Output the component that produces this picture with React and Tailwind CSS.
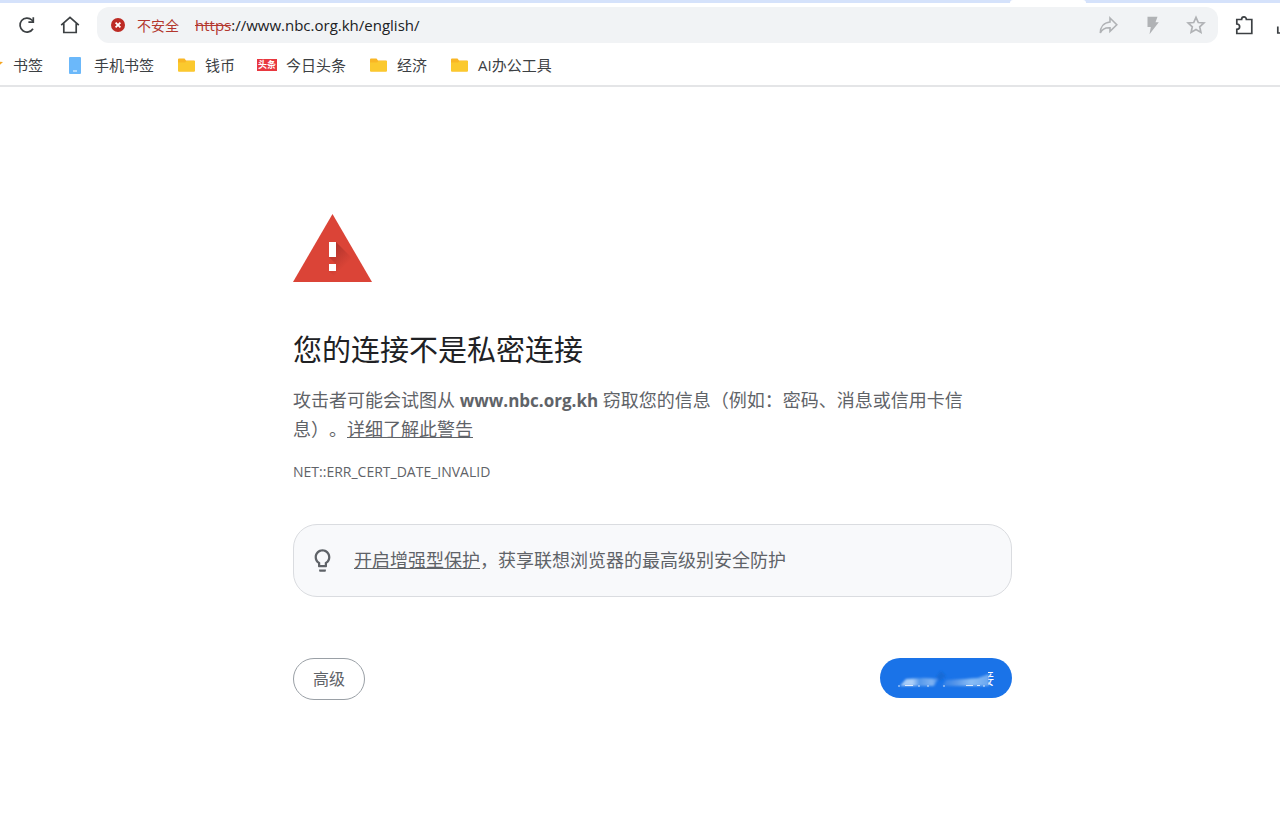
import { useState } from 'react';

const folder = (
  <svg viewBox="0 0 17 14" className="w-[17px] h-[14px]">
    <path d="M0 1.5Q0 .5 1 .5H6.5L8 2.5H16Q17 2.5 17 3.5V12.5Q17 13.5 16 13.5H1Q0 13.5 0 12.5Z" fill="#f9b625" />
    <path d="M0 4.5H7L8.5 3H17V12.5Q17 13.5 16 13.5H1Q0 13.5 0 12.5Z" fill="#fbc92e" />
  </svg>
);

const bookmarks = [
  {
    label: '书签',
    icon: (
      <svg viewBox="0 0 20 20" className="w-5 h-5">
        <path d="M10 1l2.600 5.400 6.400.6-4.600 4.300 1.300 6.200L10 14.400l-5.700 3.100 1.300-6.200L1 7l6.400-.6z" fill="#f5a623" />
      </svg>
    ),
  },
  {
    label: '手机书签',
    icon: (
      <svg viewBox="0 0 12 17" className="w-3 h-[17px]">
        <rect width="12" height="17" rx="1" fill="#6bb8fa" />
        <rect x="4" y="13.500" width="4" height="1" fill="#fff" />
      </svg>
    ),
  },
  { label: '钱币', icon: folder },
  {
    label: '今日头条',
    icon: (
      <span className="w-5 h-3 bg-[#e8383f] text-white text-[9px] leading-3 font-bold text-center">头条</span>
    ),
  },
  { label: '经济', icon: folder },
  { label: 'AI办公工具', icon: folder },
];

function TabStrip() {
  return (
    <div className="flex h-[3px] bg-[#d5e2fb]">
      <div className="ml-auto mr-[194px] w-[76px] rounded-t-sm bg-white" />
    </div>
  );
}

function AddressBar() {
  const [url, setUrl] = useState('://www.nbc.org.kh/english/');

  return (
    <div className="flex flex-1 items-center h-9 pl-[14px] pr-3 rounded-xl bg-[#f1f3f5]">
      <svg viewBox="0 0 14 14" className="w-[14px] h-[14px] shrink-0">
        <circle cx="7" cy="7" r="7" fill="#bd2b24" />
        <path d="M4.600 4.600l4.800 4.800M9.400 4.600l-4.800 4.800" stroke="#fff" strokeWidth="1.800" />
      </svg>
      <span className="ml-3 text-[14px] text-[#b3372e]">不安全</span>
      <label htmlFor="url" className="ml-4 text-[15px] text-[#b3372e] line-through">https</label>
      <input
        id="url"
        value={url}
        onChange={(e) => setUrl(e.target.value)}
        className="flex-1 min-w-0 bg-transparent outline-none text-[15px] text-[#202124]"
      />
      <div className="flex items-center gap-6 text-[#b0b2b5]">
        <button type="button" aria-label="分享">
          <svg viewBox="0 0 20 20" className="w-5 h-5" fill="none" stroke="currentColor" strokeWidth="1.600">
            <path d="M12 3L18.800 9.800L12 16.400V12.800C7.500 12.600 4 14 2.300 18C2.300 12 5.800 7.600 12 7Z" />
          </svg>
        </button>
        <button type="button" aria-label="极速">
          <svg viewBox="0 0 20 20" className="w-5 h-5" fill="currentColor">
            <path d="M5.500 1.800H15.500L13.500 7.300H16.800L7.500 19.300L8.800 12H5.500Z" />
          </svg>
        </button>
        <button type="button" aria-label="收藏">
          <svg viewBox="0 0 20 20" className="w-5 h-5" fill="none" stroke="currentColor" strokeWidth="1.700">
            <path d="M10 2.300l2.300 5.200 5.600.5-4.200 3.800 1.200 5.600L10 14.600l-4.900 2.800 1.200-5.600L2.100 8l5.600-.5z" />
          </svg>
        </button>
      </div>
    </div>
  );
}

function Toolbar() {
  return (
    <div className="flex items-center pt-1 pl-[17px] text-[#3c4043]">
      <button type="button" aria-label="重新加载">
        <svg viewBox="0 0 20 20" className="w-5 h-5" fill="none" stroke="currentColor" strokeWidth="1.700">
          <path d="M16 13.700A7 7 0 1 1 14.900 5L16.300 6.700" />
          <path d="M16.300 2.300V7.200H11.400" />
        </svg>
      </button>
      <button type="button" aria-label="主页" className="ml-[23px] mr-[17px]">
        <svg viewBox="0 0 20 20" className="w-5 h-5" fill="none" stroke="currentColor" strokeWidth="1.700">
          <path d="M1.200 10.200L10 2.300L18.800 10.200M3.800 8.500V17.500H16.200V8.500" />
        </svg>
      </button>
      <AddressBar />
      <button type="button" aria-label="扩展程序" className="ml-4">
        <svg viewBox="0 0 20 20" className="w-5 h-5" fill="none" stroke="currentColor" strokeWidth="1.700">
          <path d="M2.800 4.500H7.600C7.600 1 12.400 1 12.400 4.500H17.800V18.500H2.800V14.300C6.600 14.100 6.600 9.200 2.800 9Z" />
        </svg>
      </button>
      <div className="w-[26px] h-5 overflow-hidden">
        <button type="button" aria-label="下载" className="ml-[22px]">
          <svg viewBox="0 0 20 20" className="w-5 h-5" fill="none" stroke="currentColor" strokeWidth="1.700">
            <path d="M1.800 11.500V18H18.200V11.500M10 2V13M5.500 9L10 13.500L14.500 9" />
          </svg>
        </button>
      </div>
    </div>
  );
}

function BookmarksBar() {
  return (
    <nav className="flex items-center gap-[22px] h-11 pt-0.5 -ml-4 border-b-2 border-[#e4e5e7] text-[15px] text-[#3c4043] whitespace-nowrap">
      {bookmarks.map((b) => (
        <a key={b.label} href="#" className="flex items-center gap-[9px]">
          <span className="flex w-5 justify-center">{b.icon}</span>
          {b.label}
        </a>
      ))}
    </nav>
  );
}

function WarningIcon() {
  return (
    <svg viewBox="0 0 79 68" className="w-[79px] h-[68px]">
      <defs>
        <linearGradient id="shade" gradientUnits="userSpaceOnUse" x1="40" y1="36" x2="54" y2="50">
          <stop offset="0" stopColor="#a52f28" stopOpacity=".7" />
          <stop offset="1" stopColor="#a52f28" stopOpacity="0" />
        </linearGradient>
      </defs>
      <path d="M39.500 0L79 68H0Z" fill="#db4437" />
      <path d="M43 28L58 43L70 68H47L36 57L43 50L36 43Z" fill="url(#shade)" />
      <path d="M36 28h7v15h-7zM36 50h7v7h-7z" fill="#fff" />
    </svg>
  );
}

function SafetyButton() {
  return (
    <button type="button" className="relative h-10 px-[18px] rounded-full bg-[#1a73e8] text-white text-[16px] overflow-hidden">
      返回安全连接
      {/* smudge over the label, only the tail of the last character stays clear */}
      <svg viewBox="0 0 132 40" className="absolute inset-0 w-full h-full">
        <defs>
          <filter id="soft" x="-10%" y="-50%" width="120%" height="200%">
            <feGaussianBlur stdDeviation="1.100" />
          </filter>
          <linearGradient id="streak" x1="0" x2="1">
            <stop offset="0" stopColor="#b9d9fb" />
            <stop offset=".14" stopColor="#c6e0fc" />
            <stop offset=".22" stopColor="#5f9fec" />
            <stop offset=".36" stopColor="#93bff4" />
            <stop offset=".45" stopColor="#2b7de8" />
            <stop offset=".62" stopColor="#5f9bea" />
            <stop offset=".8" stopColor="#9ecbf8" />
            <stop offset="1" stopColor="#77b0f2" />
          </linearGradient>
        </defs>
        <path d="M14 6H118V14H108V34H14Z" fill="#1a73e8" />
        <g filter="url(#soft)">
          <path d="M20 28L26 21L44 20L58 21L54 28ZM62 28L66 22L85 21L98 20L109 16V28Z" fill="url(#streak)" opacity=".85" />
          <path d="M56 19L61 13L66 18L60 23Z" fill="#176ad6" />
        </g>
        <path d="M18 28h2M25 27.500h8M38 28h2M47 28h2M63 28h2M86 27.500h7M97 27.500h3M103 28h2" stroke="#fff" strokeWidth="1" opacity=".8" />
      </svg>
    </button>
  );
}

export default function App() {
  return (
    <div className="min-h-screen bg-white overflow-x-hidden font-['Open_Sans','Noto_Sans_CJK_SC',sans-serif] [text-spacing-trim:space-all]" lang="zh-CN">
      <header>
        <TabStrip />
        <Toolbar />
        <BookmarksBar />
      </header>

      <main className="pt-[127px] pb-16 pl-[25px] text-[18px] text-[#5f6368]">
        <div className="w-full max-w-[719px] mx-auto">
          <WarningIcon />

          <h1 className="mt-12 text-[29px] leading-10 text-[#202124]">您的连接不是私密连接</h1>

          <p className="mt-4 leading-[29px]">
            攻击者可能会试图从 <strong className="text-[17px]">www.nbc.org.kh</strong> 窃取您的信息（例如：密码、消息或信用卡信息）。
            <a href="#" className="underline">详细了解此警告</a>
          </p>

          <p className="mt-[18px] text-[14px] leading-5">NET::ERR_CERT_DATE_INVALID</p>

          <div className="flex items-center mt-[42px] h-[73px] pl-[15px] rounded-3xl border border-[#dadce0] bg-[#f8f9fb]">
            <svg viewBox="0 0 24 24" className="w-[27px] h-[27px] shrink-0" fill="currentColor">
              <path d="M9 21c0 .55.45 1 1 1h4c.55 0 1-.45 1-1v-1H9v1zm3-19C8.140 2 5 5.140 5 9c0 2.380 1.190 4.470 3 5.740V17c0 .55.45 1 1 1h6c.55 0 1-.45 1-1v-2.260c1.810-1.270 3-3.360 3-5.740 0-3.860-3.140-7-7-7zm2.850 11.100l-.85.6V16h-4v-2.300l-.85-.6C7.800 12.160 7 10.630 7 9c0-2.760 2.240-5 5-5s5 2.240 5 5c0 1.630-.8 3.160-2.150 4.100z" />
            </svg>
            <p className="ml-[18px]">
              <a href="#" className="underline">开启增强型保护</a>，获享联想浏览器的最高级别安全防护
            </p>
          </div>

          <div className="flex items-start justify-between mt-[61px]">
            <button type="button" className="h-[42px] px-[19px] rounded-full border border-[#9aa0a6] text-[16px]">
              高级
            </button>
            <SafetyButton />
          </div>
        </div>
      </main>
    </div>
  );
}
